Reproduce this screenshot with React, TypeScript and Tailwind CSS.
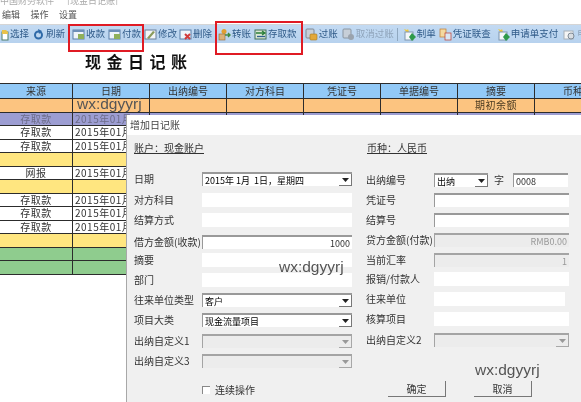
const FONT = "font-['Noto_Sans_CJK_SC','Liberation_Sans',sans-serif]";

function Ico({ kind }: { kind: string }) {
  const cls = "w-[13px] h-[13px] shrink-0";
  if (kind === "doc") return (
    <svg viewBox="0 0 13 13" className={cls}>
      <rect x="1" y="2" width="11" height="9" fill="#eef4fa" stroke="#5a7fa8" />
      <rect x="1" y="2" width="11" height="2" fill="#6d8fb8" />
      <rect x="6" y="6" width="6" height="5" fill="#8fb05a" />
    </svg>
  );
  if (kind === "select") return (
    <svg viewBox="0 0 13 13" className={cls}>
      <rect x="6" y="4" width="6" height="8" fill="#fff" stroke="#4f7f6a" />
      <path d="M6 2h4l2 2v2H6z" fill="#e8c24a" />
    </svg>
  );
  if (kind === "refresh") return (
    <svg viewBox="0 0 13 13" className={cls}>
      <circle cx="6.5" cy="7" r="3.5" fill="none" stroke="#2f6aa8" strokeWidth="2" />
      <path d="M6 1l4 2-3 3z" fill="#2f6aa8" />
    </svg>
  );
  if (kind === "edit") return (
    <svg viewBox="0 0 13 13" className={cls}>
      <rect x="1" y="2" width="11" height="9" fill="#f3f5f8" stroke="#6b7f99" />
      <path d="M3 10l6-7 2 1-6 7z" fill="#8a9a5a" />
    </svg>
  );
  if (kind === "delete") return (
    <svg viewBox="0 0 13 13" className={cls}>
      <rect x="1" y="2" width="11" height="9" fill="#eef4fa" stroke="#5a7fa8" />
      <path d="M6 6l5 5M11 6l-5 5" stroke="#d23a3a" strokeWidth="2" />
    </svg>
  );
  if (kind === "transfer") return (
    <svg viewBox="0 0 13 13" className={cls}>
      <circle cx="6" cy="3.5" r="2.5" fill="#e0a030" />
      <rect x="1" y="6" width="6" height="6" fill="#d9b27a" stroke="#9a6a30" strokeWidth=".6" />
      <path d="M7 7h5M10 5l2 2-2 2" fill="none" stroke="#3f8a3f" strokeWidth="1.4" />
    </svg>
  );
  if (kind === "cash") return (
    <svg viewBox="0 0 13 13" className={cls}>
      <rect x="1" y="2" width="11" height="9" fill="#dbe8d4" stroke="#3f6f5a" />
      <path d="M2 5h8M8 3l3 2-3 2" fill="none" stroke="#2b7f3a" strokeWidth="1.3" />
      <path d="M11 8.500H3" stroke="#2f5f8f" strokeWidth="1.300" />
    </svg>
  );
  if (kind === "post") return (
    <svg viewBox="0 0 13 13" className={cls}>
      <rect x="1" y="1" width="8" height="9" rx="1" fill="#c7cfd8" stroke="#7f8a96" />
      <rect x="5" y="6" width="7" height="6" rx="1" fill="#e2a83a" stroke="#a87820" strokeWidth=".6" />
    </svg>
  );
  if (kind === "unpost") return (
    <svg viewBox="0 0 13 13" className={cls}>
      <rect x="1" y="1" width="8" height="9" rx="1" fill="#c7cfd8" stroke="#8a95a0" />
      <circle cx="9" cy="9" r="3" fill="#9aa3ad" />
    </svg>
  );
  if (kind === "make") return (
    <svg viewBox="0 0 13 13" className={cls}>
      <path d="M1 1l3 1 1-1 1 3-2 1z" fill="#f0c83c" />
      <rect x="2" y="4" width="8" height="8" fill="#f4f7fa" stroke="#7f96ad" />
      <path d="M9 5l4 4-4 4-3-4z" fill="#2f9a4a" />
    </svg>
  );
  if (kind === "link") return (
    <svg viewBox="0 0 13 13" className={cls}>
      <rect x="1" y="1" width="6" height="8" fill="#f3d9a0" stroke="#c07a30" strokeWidth=".7" />
      <rect x="6" y="5" width="6" height="7" fill="#d9e6f3" stroke="#c0392b" strokeWidth=".7" />
    </svg>
  );
  return (
    <svg viewBox="0 0 13 13" className={cls}>
      <rect x="1" y="3" width="9" height="8" fill="#f5f5f5" stroke="#a8b0b8" />
      <circle cx="8" cy="8" r="3" fill="#d8dde2" stroke="#7f8a96" />
    </svg>
  );
}

function Tool({ icon, label, muted, cls }: { icon: string; label: string; muted?: boolean; cls: string }) {
  return (
    <div className={`flex items-center gap-[1px] whitespace-nowrap shrink-0 ${cls}`}>
      <Ico kind={icon} />
      <span className={`text-[9.500px] leading-none ${muted ? "text-[#8fa4ba]" : "text-[#2f5a88]"}`}>{label}</span>
    </div>
  );
}

const COLS = ["w-[73px]", "w-[77px]", "w-[77px]", "w-[77px]", "w-[77px]", "w-[77px]", "w-[77px]", "w-[77px]"];
const HEAD = ["来源", "日期", "出纳编号", "对方科目", "凭证号", "单据编号", "摘要", "币种"];

function Row({ bg, cells, text }: { bg: string; cells: string[]; text: string }) {
  return (
    <div className={`flex h-[13.500px] border-b border-[#2c2c2c] ${bg} ${text}`}>
      {COLS.map((c, i) => (
        <div key={i} className={`${c} shrink-0 flex items-center overflow-hidden whitespace-nowrap text-[10px] leading-none tracking-[0.5px] border-r border-[#2c2c2c] ${i === 1 && cells[i] ? "justify-start pl-[2px]" : "justify-center"}`}>
          {cells[i] || ""}
        </div>
      ))}
    </div>
  );
}

const d = "2015年01月";
const ROWS = [
  { bg: "bg-[#fcc480]", cells: ["", "", "", "", "", "", "期初余额"], text: "text-[#4a3a20]" },
  { bg: "bg-[#9c9dd2]", cells: ["存取款", d], text: "text-[#6d6d8a]" },
  { bg: "bg-white", cells: ["存取款", d], text: "text-[#333]" },
  { bg: "bg-white", cells: ["存取款", d], text: "text-[#333]" },
  { bg: "bg-[#ffe680]", cells: [], text: "" },
  { bg: "bg-white", cells: ["网报", d], text: "text-[#333]" },
  { bg: "bg-[#ffe680]", cells: [], text: "" },
  { bg: "bg-white", cells: ["存取款", d], text: "text-[#333]" },
  { bg: "bg-white", cells: ["存取款", d], text: "text-[#333]" },
  { bg: "bg-white", cells: ["存取款", d], text: "text-[#333]" },
  { bg: "bg-[#ffe680]", cells: [], text: "" },
  { bg: "bg-[#8fcc8e]", cells: [], text: "" },
  { bg: "bg-[#8fcc8e]", cells: [], text: "" },
];

function Arrow({ off }: { off?: boolean }) {
  return (
    <div className={`absolute right-0 top-0 bottom-0 w-[13px] flex items-center justify-center border-r border-b ${off ? "border-[#a8a8a8]" : "border-[#777]"}`}>
      <svg viewBox="0 0 7 4" className="w-[7px] h-[4px]"><path d="M0 0h7L3.500 4z" fill={off ? "#999" : "#222"} /></svg>
    </div>
  );
}

type FieldKind = "flat" | "sunken" | "select" | "off" | "offselect";
function Field({ kind, value, right, cls }: { kind: FieldKind; value?: string; right?: boolean; cls: string }) {
  const look = {
    flat: "bg-white",
    sunken: "bg-white border-t-2 border-l border-[#999]",
    select: "bg-white border-t-2 border-l border-[#999]",
    off: "bg-[#ececec] border-t-2 border-l border-[#a4a4a4] text-[#999]",
    offselect: "bg-[#ececec] border-t-2 border-l border-[#a4a4a4]",
  }[kind];
  return (
    <div className={`relative flex items-center h-[14px] text-[9px] leading-none px-[2px] whitespace-pre ${right ? "justify-end" : ""} ${look} ${cls}`}>
      {value}
      {(kind === "select" || kind === "offselect") && <Arrow off={kind === "offselect"} />}
    </div>
  );
}

function Line({ label, mt, children }: { label: string; mt: string; children: React.ReactNode }) {
  return (
    <div className={`flex items-center ${mt}`}>
      <span className="w-[68px] shrink-0 text-[10px] leading-none text-[#333] whitespace-nowrap">{label}</span>
      {children}
    </div>
  );
}

function Wx({ cls }: { cls: string }) {
  return <span className={`absolute text-[15.500px] leading-none text-[#555] font-['Liberation_Sans',sans-serif] ${cls}`}>wx:dgyyrj</span>;
}

export default function App() {
  return (
    <div className={`relative w-[581px] h-[402px] overflow-hidden bg-white blur-[0.5px] ${FONT}`}>
      <div className="h-[5px] overflow-hidden flex gap-[13px] text-[9px] leading-[2px] text-[#aaa]">
        <span>中国财务软件</span><span>[现金日记账]</span>
      </div>
      <div className="h-[19px] flex items-center gap-[10.500px] pl-[2px] text-[9px] text-[#555]">
        <span>编辑</span><span>操作</span><span>设置</span>
      </div>
      <div className="h-[19px] bg-gradient-to-b from-[#c3daf2] to-[#b7d2ee] border-t border-[#d5d5d5] relative flex items-center whitespace-nowrap">
        <Tool icon="select" label="选择" cls="ml-[-4px]" />
        <Tool icon="refresh" label="刷新" cls="ml-[3px]" />
        <Tool icon="doc" label="收款" cls="ml-[7px]" />
        <Tool icon="doc" label="付款" cls="ml-[3px]" />
        <Tool icon="edit" label="修改" cls="ml-[3px]" />
        <Tool icon="delete" label="删除" cls="ml-[2px]" />
        <Tool icon="transfer" label="转账" cls="ml-[6px]" />
        <Tool icon="cash" label="存取款" cls="ml-[3px]" />
        <Tool icon="post" label="过账" cls="ml-[8px]" />
        <Tool icon="unpost" label="取消过账" muted cls="ml-[4px]" />
        <div className="w-px h-[13px] bg-[#8fa8c0] ml-[3px] shrink-0" />
        <Tool icon="make" label="制单" cls="ml-[5px]" />
        <Tool icon="link" label="凭证联查" cls="ml-[3px]" />
        <Tool icon="make" label="申请单支付" cls="ml-[6px]" />
        <Tool icon="other" label="申请" muted cls="ml-[5px]" />
      </div>
      <div className="h-[40px] pl-[85px] pt-[8px] text-[16px] leading-[20px] font-bold tracking-[5.500px] text-[#111]">
        现金日记账
      </div>

      <div className="border-t border-[#2c2c2c]">
        <div className="flex h-[15px] bg-[#92c9f7] border-b border-[#2c2c2c] text-[#333]">
          {COLS.map((c, i) => (
            <div key={i} className={`${c} shrink-0 flex items-center justify-center text-[10px] leading-none border-r border-[#2c2c2c]`}>{HEAD[i]}</div>
          ))}
        </div>
        {ROWS.map((r, i) => <Row key={i} {...r} />)}
      </div>

      {/* Red highlight frames */}
      <div className="absolute left-[68px] top-[24px] w-[76px] h-[28px] border-2 border-[#e01b24]" />
      <div className="absolute left-[215px] top-[21px] w-[88px] h-[34px] border-2 border-[#e01b24]" />

      {/* Dialog */}
      <div className="absolute left-[126px] top-[115px] w-[455px] h-[287px] bg-[#f0f0f0] border-l border-[#a8a8a8] flex flex-col">
        <div className="h-[20px] bg-white flex items-center pl-[3px] text-[10px] leading-none text-[#444]">增加日记账</div>
        <div className="relative flex-1 pl-[7px]">
          <div className="flex pt-[8px] text-[10px] leading-none text-[#333] underline">
            <span className="w-[233px]">账户：现金账户</span>
            <span>币种：人民币</span>
          </div>
          <div className="flex pt-[19px]">
            <div className="w-[232px] flex flex-col">
              <Line label="日期" mt="mt-0"><Field kind="select" value="2015年 1月  1日，星期四" cls="w-[150px]" /></Line>
              <Line label="对方科目" mt="mt-[7px]"><Field kind="flat" cls="w-[150px]" /></Line>
              <Line label="结算方式" mt="mt-[6px]"><Field kind="flat" cls="w-[150px]" /></Line>
              <Line label="借方金额(收款)" mt="mt-[8px]"><Field kind="sunken" value="1000" right cls="w-[150px] text-[#333]" /></Line>
              <Line label="摘要" mt="mt-[4px]"><Field kind="flat" cls="w-[150px]" /></Line>
              <Line label="部门" mt="mt-[6px]"><Field kind="flat" cls="w-[150px]" /></Line>
              <Line label="往来单位类型" mt="mt-[6px]"><Field kind="select" value="客户" cls="w-[150px]" /></Line>
              <Line label="项目大类" mt="mt-[6px]"><Field kind="select" value="现金流量项目" cls="w-[150px]" /></Line>
              <Line label="出纳自定义1" mt="mt-[7px]"><Field kind="offselect" cls="w-[150px]" /></Line>
              <Line label="出纳自定义3" mt="mt-[6px]"><Field kind="offselect" cls="w-[150px]" /></Line>
              <div className="flex items-center mt-[17px] pl-[68px] text-[10px] leading-none text-[#333]">
                <span className="w-[8px] h-[8px] bg-white border-t border-l border-[#888] mr-[5px]" />
                连续操作
              </div>
            </div>
            <div className="flex flex-col">
              <Line label="出纳编号" mt="mt-[1px]">
                <Field kind="select" value="出纳" cls="w-[54px]" />
                <span className="ml-[6px] mr-[9px] text-[10px] leading-none text-[#333]">字</span>
                <Field kind="sunken" value="0008" cls="w-[55px] text-[#333]" />
              </Line>
              <Line label="凭证号" mt="mt-[6px]"><Field kind="sunken" cls="w-[135px]" /></Line>
              <Line label="结算号" mt="mt-[6px]"><Field kind="sunken" cls="w-[135px]" /></Line>
              <Line label="贷方金额(付款)" mt="mt-[6px]"><Field kind="off" value="RMB0.00" right cls="w-[135px]" /></Line>
              <Line label="当前汇率" mt="mt-[6px]"><Field kind="off" value="1" right cls="w-[135px]" /></Line>
              <Line label="报销/付款人" mt="mt-[5px]"><Field kind="flat" cls="w-[135px]" /></Line>
              <Line label="往来单位" mt="mt-[6px]"><Field kind="flat" cls="w-[131px]" /></Line>
              <Line label="核算项目" mt="mt-[6px]"><Field kind="flat" cls="w-[135px]" /></Line>
              <Line label="出纳自定义2" mt="mt-[7px]"><Field kind="offselect" cls="w-[135px]" /></Line>
            </div>
          </div>
          <div className="absolute left-[261px] top-[246px] flex gap-[28px]">
            <button className="w-[58px] h-[16px] flex items-center justify-center text-[10px] leading-none text-[#333] border-r border-b border-[#777]">确定</button>
            <button className="w-[58px] h-[16px] flex items-center justify-center text-[10px] leading-none text-[#333] border-r border-b border-[#777]">取消</button>
          </div>
        </div>
      </div>

      <Wx cls="left-[77px] top-[96px]" />
      <Wx cls="left-[279px] top-[259px]" />
      <Wx cls="left-[475px] top-[362px]" />
    </div>
  );
}
